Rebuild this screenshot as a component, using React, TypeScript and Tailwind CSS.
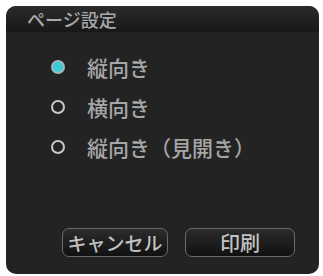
const options = ['縦向き', '横向き', '縦向き（見開き）']

export default function App() {
    const selected = 0

    return (
        <div
            className="h-[276px] w-[323px] bg-white pl-[6px] pt-[6px]"
            style={{ fontFamily: '"Noto Sans CJK JP", sans-serif' }}
        >
            <div className="flex h-[268px] w-[313px] flex-col overflow-hidden rounded-[10px] bg-[#232323]">
                <div className="flex h-[26px] items-center bg-gradient-to-b from-[#2b2b2b] to-[#181818] pl-[21px] text-[18px] leading-none font-medium text-[#a9a9a9]">
                    ページ設定
                </div>

                <div className="flex flex-col pt-[15px] pl-[45px]">
                    {options.map((label, i) => (
                        <div key={label} className="flex h-[40px] items-center gap-[22px]">
                            {i === selected ? (
                                <span className="flex h-[14px] w-[14px] items-center justify-center rounded-full bg-[#9fb8bb]">
                                    <span className="h-[10px] w-[10px] rounded-full bg-[#3ccbd4]" />
                                </span>
                            ) : (
                                <span className="h-[14px] w-[14px] rounded-full border-2 border-[#c8c8c8]" />
                            )}
                            <span className="text-[21px] leading-none font-medium text-[#a6a6a6]">
                                {label}
                            </span>
                        </div>
                    ))}
                </div>

                <div className="mt-auto flex gap-[17px] pb-[17px] pl-[56px]">
                    <button className="flex h-[29px] w-[106px] items-center justify-center rounded-[7px] border-[1.5px] border-[#6a6a6a] bg-gradient-to-b from-[#2c2c2c] to-[#111111] text-[19px] leading-none font-medium text-[#c2c2c2]">
                        キャンセル
                    </button>
                    <button className="flex h-[29px] w-[110px] items-center justify-center rounded-[7px] border-[1.5px] border-[#6a6a6a] bg-gradient-to-b from-[#2c2c2c] to-[#111111] text-[20px] leading-none font-medium text-[#c2c2c2]">
                        印刷
                    </button>
                </div>
            </div>
        </div>
    )
}
